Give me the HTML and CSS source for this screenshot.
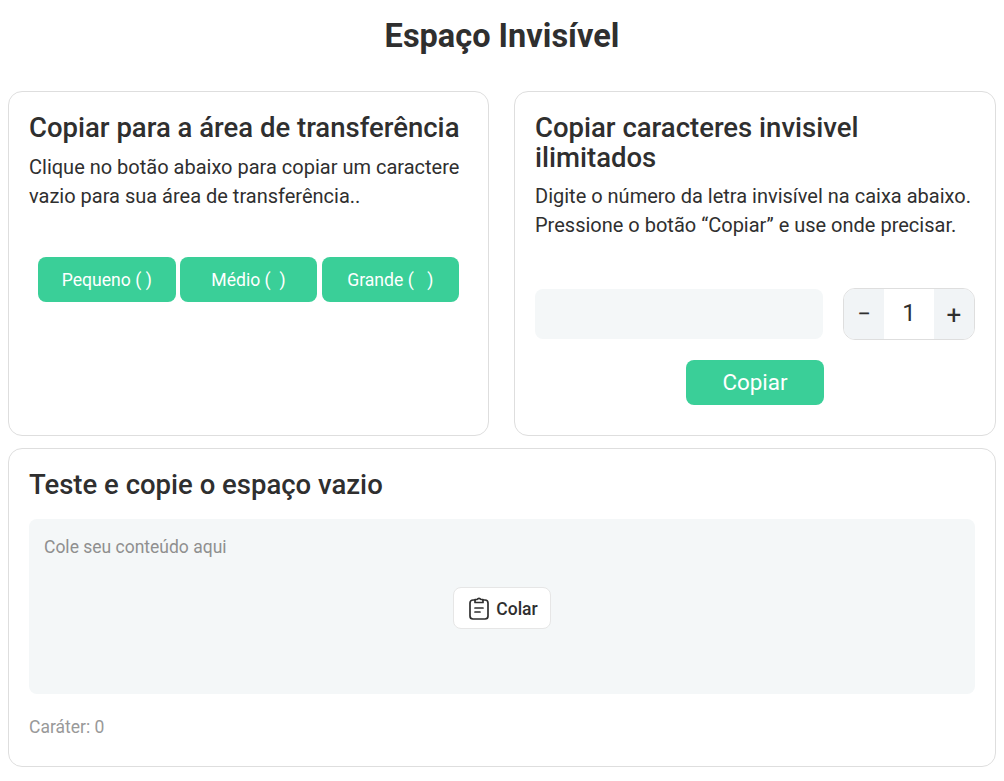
FILE: index.html
```html
<!DOCTYPE html>
<html lang="pt">
<head>
    <meta charset="UTF-8">
    <meta name="viewport" content="width=device-width, initial-scale=1.0">
    <title>Espaço Invisível</title>
    <link rel="stylesheet" href="styles.css">
</head>
<body>
    <h1>Espaço Invisível</h1>

    <div class="top-row">
        <section class="card card-left">
            <h2>Copiar para a área de transferência</h2>
            <p>Clique no botão abaixo para copiar um caractere vazio para sua área de transferência..</p>
            <div class="size-buttons">
                <button class="btn-green btn-small">Pequeno (&#8197;)</button>
                <button class="btn-green btn-small">Médio (&#8194;)</button>
                <button class="btn-green btn-small">Grande (&#8194;&#8197;)</button>
            </div>
        </section>

        <section class="card card-right">
            <h2>Copiar caracteres invisivel ilimitados</h2>
            <p>Digite o número da letra invisível na caixa abaixo. Pressione o botão “Copiar” e use onde precisar.</p>
            <div class="copy-row">
                <div class="copy-field"></div>
                <div class="stepper">
                    <span class="step">−</span>
                    <span class="step-value">1</span>
                    <span class="step step-plus">+</span>
                </div>
            </div>
            <button class="btn-green btn-copy">Copiar</button>
        </section>
    </div>

    <section class="card card-test">
        <h2>Teste e copie o espaço vazio</h2>
        <div class="test-area">
            <span class="placeholder">Cole seu conteúdo aqui</span>
            <button class="btn-paste">
                <svg width="22" height="24" viewBox="0 0 22 24" fill="none" stroke="#2f2f2f" stroke-width="1.7" stroke-linecap="round" stroke-linejoin="round">
                    <path d="M7 4H5a3 3 0 0 0-3 3v13a3 3 0 0 0 3 3h12a3 3 0 0 0 3-3V7a3 3 0 0 0-3-3h-2"/>
                    <path d="M7 6.5V3.5h2.2a2 2 0 0 1 3.6 0H15v3z"/>
                    <path d="M7 12h8M7 16h5"/>
                </svg>
                <span class="paste-label">Colar</span>
            </button>
        </div>
        <div class="counter">Caráter: 0</div>
    </section>
</body>
</html>
```

FILE: styles.css
```css
* {
    box-sizing: border-box;
}

body {
    margin: 0;
    padding: 0 8px;
    font-family: Roboto, sans-serif;
    background-color: #fff;
    color: #2f2f2f;
}

h1 {
    margin: 0;
    padding-top: 18px;
    height: 91px;
    font-size: 32.5px;
    line-height: 36px;
    font-weight: 700;
    text-align: center;
}

h2 {
    margin: 0;
    font-size: 27.5px;
    line-height: 30px;
    font-weight: 500;
}

p {
    margin: 0;
    font-size: 20px;
    line-height: 29px;
}

button {
    font-family: inherit;
    cursor: pointer;
}

.top-row {
    display: flex;
    justify-content: space-between;
}

.card {
    background: #fff;
    border: 1px solid #dedede;
    border-radius: 14px;
    padding: 21px 20px 20px;
}

.card-left {
    width: 481px;
    height: 345px;
}

.card-left p {
    margin-top: 10px;
}

.card-right {
    width: 482px;
    height: 345px;
}

.card-right p {
    margin-top: 9px;
}

.size-buttons {
    display: flex;
    gap: 4.25px;
    margin-top: 46px;
    padding-left: 9px;
}

.btn-green {
    background-color: #3acf98;
    color: #fff;
    border: none;
    border-radius: 8px;
}

.btn-small {
    height: 45px;
    width: 137.5px;
    font-size: 17.6px;
    white-space: pre;
}

.copy-row {
    display: flex;
    justify-content: space-between;
    margin-top: 48px;
}

.copy-field {
    width: 288px;
    height: 50px;
    margin-top: 1px;
    background-color: #f4f7f8;
    border-radius: 8px;
}

.stepper {
    display: flex;
    width: 132px;
    height: 52px;
    border: 1px solid #dedede;
    border-radius: 12px;
    overflow: hidden;
}

.step {
    width: 40px;
    background-color: #f1f4f6;
    font-size: 24px;
    line-height: 50px;
    text-align: center;
}

.step-plus {
    font-size: 26px;
    line-height: 52px;
}

.step-value {
    flex: 1;
    font-size: 24px;
    line-height: 48px;
    text-align: center;
}

.btn-copy {
    display: block;
    width: 138px;
    height: 45px;
    margin: 20px auto 0;
    padding-bottom: 3px;
    font-size: 22.4px;
}

.card-test {
    height: 319px;
    margin-top: 12px;
}

.test-area {
    display: flex;
    flex-direction: column;
    align-items: center;
    height: 175px;
    margin-top: 19px;
    padding: 15px;
    background-color: #f4f7f8;
    border-radius: 8px;
}

.placeholder {
    align-self: flex-start;
    font-size: 17.5px;
    line-height: 26px;
    color: #8f8f8f;
}

.btn-paste {
    display: flex;
    align-items: center;
    gap: 6px;
    height: 42px;
    margin-top: 27px;
    padding: 0 12px 0 14px;
    background: #fff;
    border: 1px solid #e6e6e6;
    border-radius: 8px;
    font-size: 17.5px;
    font-weight: 500;
    color: #2f2f2f;
}

.paste-label {
    padding-top: 2px;
}

.counter {
    margin-top: 22px;
    font-size: 17.5px;
    line-height: 22px;
    color: #999;
}
```
